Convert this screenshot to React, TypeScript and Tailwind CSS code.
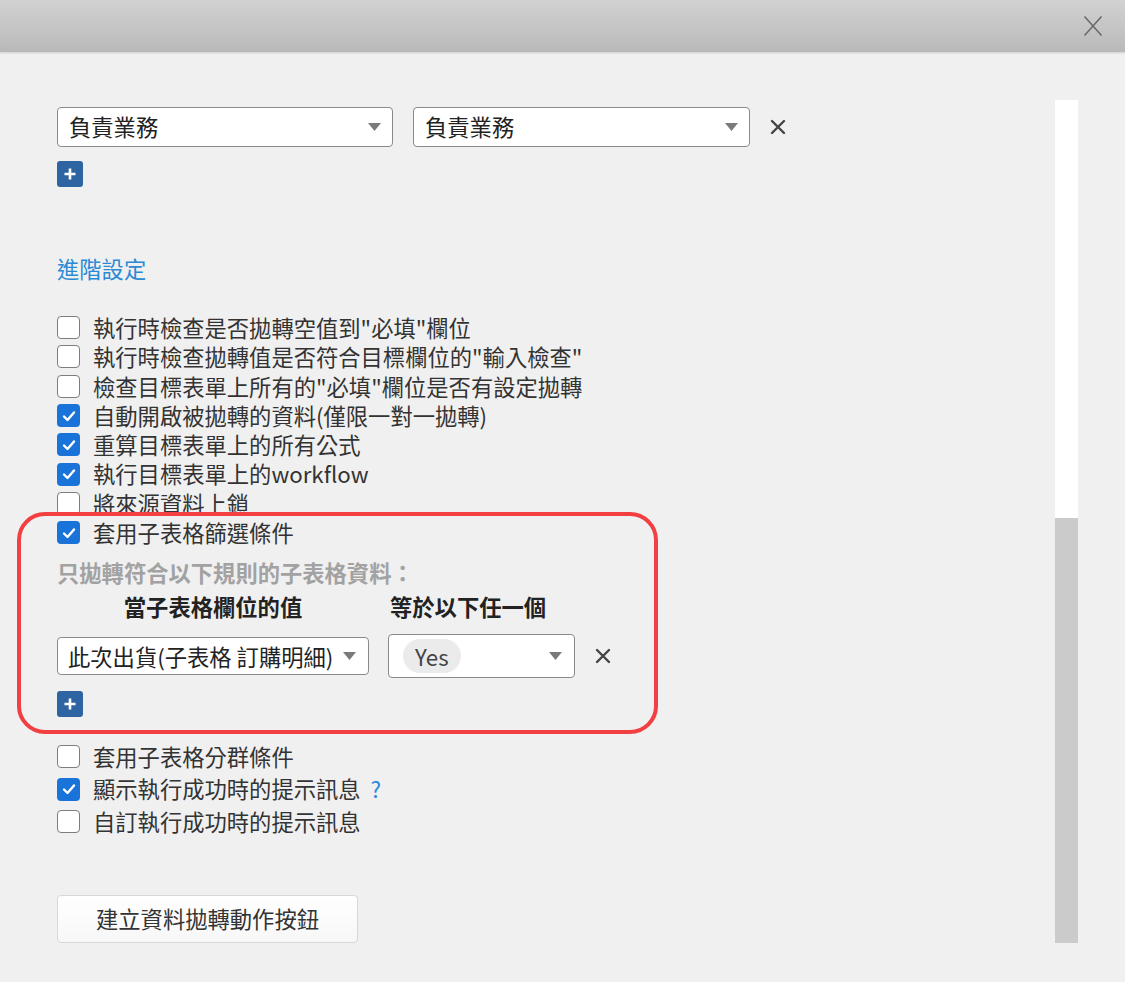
import React from 'react'

const font = { fontFamily: '"Noto Sans CJK TC", "Noto Sans", sans-serif' }

function Caret() {
  return (
    <svg width="13" height="8" viewBox="0 0 13 8" className="shrink-0">
      <path d="M0 0 H13 L6.5 8 Z" fill="#7a7a7a" />
    </svg>
  )
}

function RemoveX() {
  return (
    <svg width="16" height="16" viewBox="0 0 16 16" className="shrink-0">
      <path d="M2 2 L14 14 M14 2 L2 14" stroke="#444" strokeWidth="2.4" strokeLinecap="round" />
    </svg>
  )
}

function PlusButton() {
  return (
    <div className="w-[26px] h-[26px] rounded-[3px] bg-[#2f64a2] flex items-center justify-center">
      <svg width="14" height="14" viewBox="0 0 14 14">
        <path d="M7 1.5 V12.5 M1.5 7 H12.5" stroke="#fff" strokeWidth="2.6" />
      </svg>
    </div>
  )
}

function Checkbox({ checked }: { checked: boolean }) {
  if (checked) {
    return (
      <div className="w-[23px] h-[23px] rounded-[4px] bg-[#1a73d9] flex items-center justify-center shrink-0">
        <svg width="16" height="16" viewBox="0 0 16 16">
          <path d="M3 8.5 L6.5 12 L13 4.5" stroke="#fff" strokeWidth="2.4" fill="none" strokeLinecap="round" strokeLinejoin="round" />
        </svg>
      </div>
    )
  }
  return <div className="w-[23px] h-[23px] rounded-[4px] bg-white border-[1.5px] border-[#7d7d7d] shrink-0" />
}

function CheckRow({ label, checked, extra }: { label: string; checked: boolean; extra?: React.ReactNode }) {
  return (
    <div className="flex items-center h-full">
      <Checkbox checked={checked} />
      <span className="ml-[13px] text-[22.3px] text-[#333] whitespace-nowrap">{label}</span>
      {extra}
    </div>
  )
}

export default function App() {
  const upperOptions = [
    { label: '執行時檢查是否拋轉空值到"必填"欄位', checked: false },
    { label: '執行時檢查拋轉值是否符合目標欄位的"輸入檢查"', checked: false },
    { label: '檢查目標表單上所有的"必填"欄位是否有設定拋轉', checked: false },
    { label: '自動開啟被拋轉的資料(僅限一對一拋轉)', checked: true },
    { label: '重算目標表單上的所有公式', checked: true },
    { label: '執行目標表單上的workflow', checked: true },
    { label: '將來源資料上鎖', checked: false },
    { label: '套用子表格篩選條件', checked: true },
  ]

  return (
    <div className="w-[1125px] h-[982px] bg-[#f0f0f0] overflow-hidden flex flex-col" style={font}>
      {/* Header */}
      <div className="h-[52px] shrink-0 bg-gradient-to-b from-[#d2d2d2] to-[#b9b9b9] shadow-[0_1px_2px_rgba(0,0,0,0.15)] flex items-center justify-end pr-[22px]">
        <svg width="20" height="22" viewBox="0 0 20 22">
          <path d="M1.5 1.5 L18.5 20.5 M18.5 1.5 L1.5 20.5" stroke="#6a6a6a" strokeWidth="1.6" />
        </svg>
      </div>

      <div className="flex flex-1">
        {/* Content */}
        <div className="relative flex-1 pl-[57px] pt-[55px]">
          {/* mapping row */}
          <div className="flex items-center">
            <div className="w-[336px] h-[40px] bg-white border border-[#8a8a8a] rounded-[4px] flex items-center justify-between pl-[11px] pr-[11px]">
              <span className="text-[22.3px] text-[#222]">負責業務</span>
              <Caret />
            </div>
            <div className="ml-[20px] w-[337px] h-[40px] bg-white border border-[#8a8a8a] rounded-[4px] flex items-center justify-between pl-[11px] pr-[11px]">
              <span className="text-[22.3px] text-[#222]">負責業務</span>
              <Caret />
            </div>
            <div className="ml-[20px]">
              <RemoveX />
            </div>
          </div>
          <div className="mt-[14px]">
            <PlusButton />
          </div>

          <div className="mt-[66px] leading-[30px] text-[22.3px] text-[#2a8ad6]">進階設定</div>

          {/* options */}
          <div className="mt-[30px]">
            {upperOptions.map((o, i) => (
              <div key={i} className="h-[29.3px]">
                <CheckRow label={o.label} checked={o.checked} />
              </div>
            ))}
          </div>

          <div className="mt-[10px] leading-[30px] text-[22.3px] font-bold text-[#a2a2a2]">只拋轉符合以下規則的子表格資料：</div>

          <div className="mt-[4px] flex leading-[30px] text-[22.3px] font-bold text-[#222]">
            <div className="w-[312px] text-center">當子表格欄位的值</div>
            <div className="ml-[21px]">等於以下任一個</div>
          </div>

          <div className="mt-[13px] flex items-center">
            <div className="w-[312px] h-[38px] bg-white border border-[#8a8a8a] rounded-[4px] flex items-center justify-between pl-[10px] pr-[12px]">
              <span className="text-[22.3px] text-[#222] whitespace-nowrap">此次出貨(子表格 訂購明細)</span>
              <Caret />
            </div>
            <div className="ml-[19px] w-[187px] h-[44px] bg-white border border-[#8a8a8a] rounded-[4px] flex items-center justify-between pl-[14px] pr-[12px]">
              <span className="h-[34px] px-[12px] rounded-full bg-[#ebebeb] text-[22.3px] text-[#444] flex items-center">Yes</span>
              <Caret />
            </div>
            <div className="ml-[20px]">
              <RemoveX />
            </div>
          </div>
          <div className="mt-[13px]">
            <PlusButton />
          </div>

          <div className="mt-[23px]">
            <div className="h-[32.5px]">
              <CheckRow label="套用子表格分群條件" checked={false} />
            </div>
            <div className="h-[32.5px]">
              <CheckRow
                label="顯示執行成功時的提示訊息"
                checked={true}
                extra={<span className="ml-[10px] text-[22.3px] text-[#2a8ad6]">?</span>}
              />
            </div>
            <div className="h-[32.5px]">
              <CheckRow label="自訂執行成功時的提示訊息" checked={false} />
            </div>
          </div>

          <button className="mt-[57px] w-[301px] h-[48px] rounded-[4px] border border-[#d8d8d8] bg-gradient-to-b from-white to-[#f7f7f7] text-[22.3px] text-[#333]">
            建立資料拋轉動作按鈕
          </button>

          {/* annotation highlight */}
          <div className="absolute left-[17px] top-[460px] w-[641px] h-[222px] border-[4px] border-[#f23f42] rounded-[28px] pointer-events-none" />
        </div>

        {/* Scrollbar */}
        <div className="mt-[48px] mr-[47px] w-[23px] h-[843px] flex flex-col">
          <div className="h-[418px] bg-white" />
          <div className="flex-1 bg-[#cbcbcb]" />
        </div>
      </div>
    </div>
  )
}
